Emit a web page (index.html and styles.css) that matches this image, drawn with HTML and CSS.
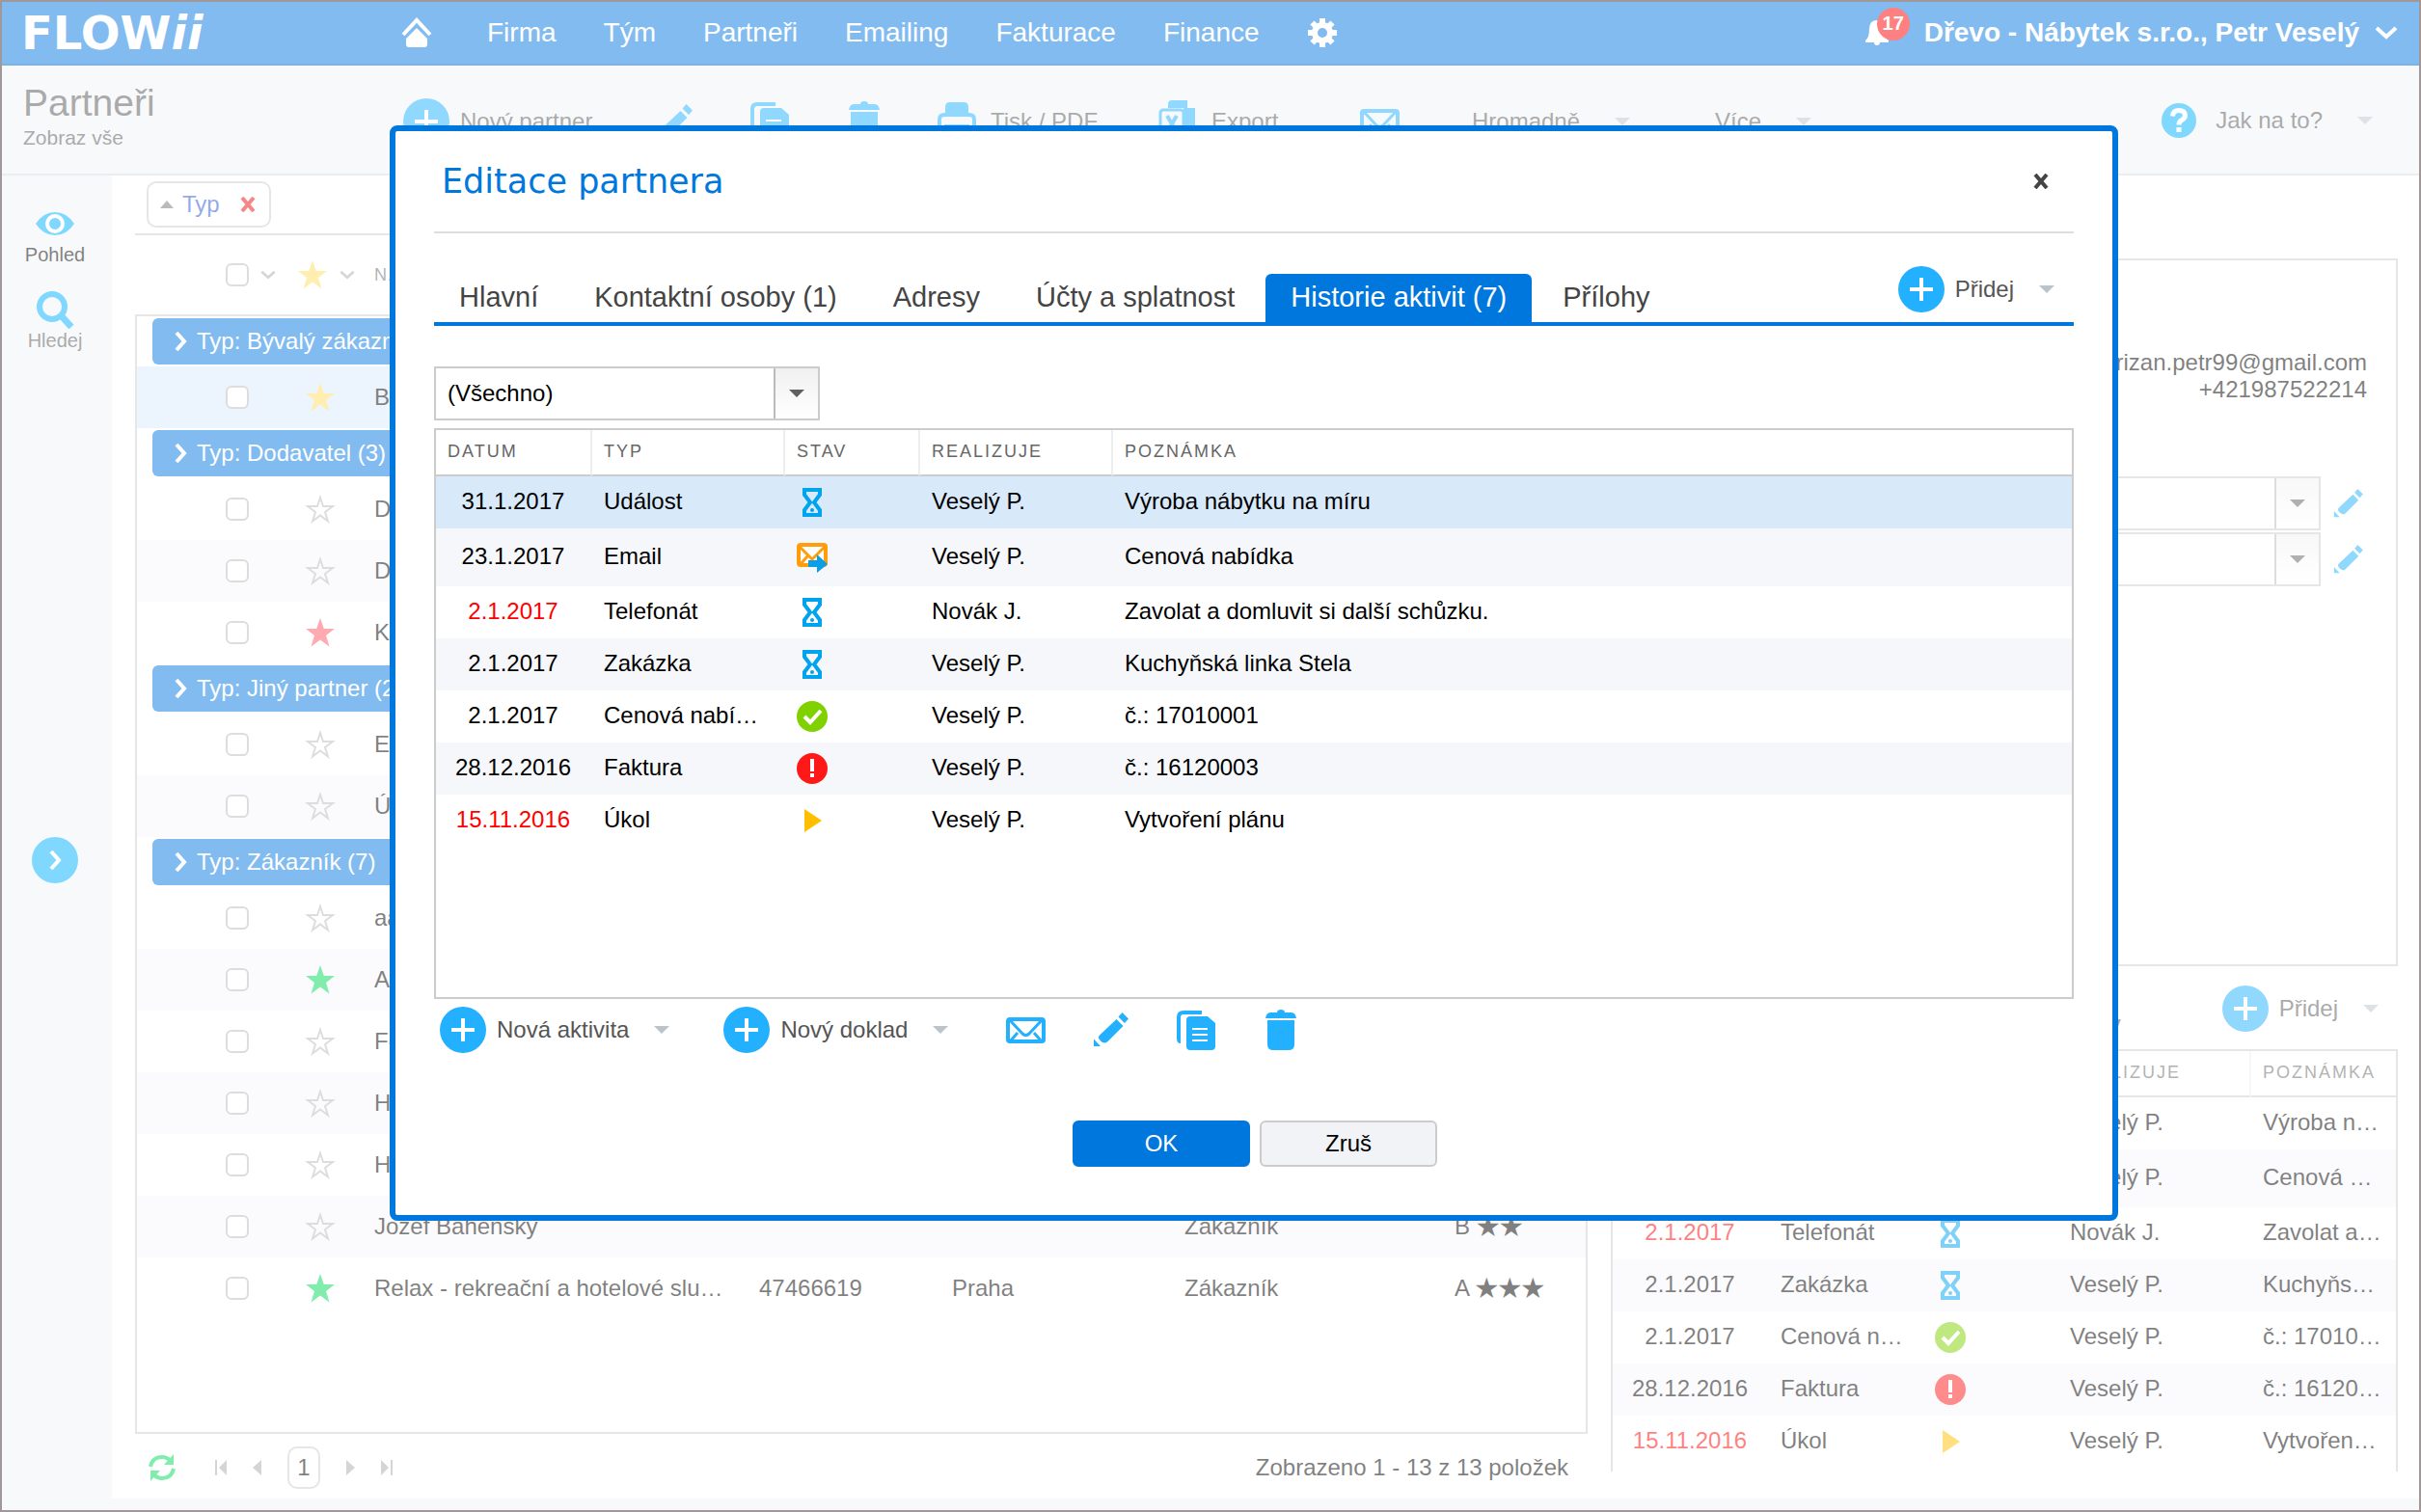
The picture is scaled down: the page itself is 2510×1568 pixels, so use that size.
FILE: index.html
```html
<!DOCTYPE html>
<html lang="cs">
<head>
    <meta charset="UTF-8">
    <meta name="viewport" content="width=device-width, initial-scale=1.0">
    <title>Flowii - Partneři</title>
    <link rel="stylesheet" href="styles.css">
</head>
<body>
    <!-- Ikony -->
    <svg class="sprite" aria-hidden="true">
        <symbol id="i-plus" viewBox="0 0 48 48"><circle cx="24" cy="24" r="24"/><path d="M24 12v24M12 24h24" stroke="#fff" stroke-width="4"/></symbol>
        <symbol id="i-pencil" viewBox="0 0 48 48"><path d="M30.500 13l7 7L21 36.500q-3.500 2.500-7-1t-1-6zM32.500 10.500L36.500 6l6.500 6.500-4 4.500zM7 33.500l7 7.500H7z"/></symbol>
        <symbol id="i-copy" viewBox="0 0 48 48"><path d="M31 6H12q-5 0-5 5v22q0 3 2 3" fill="none" stroke="currentColor" stroke-width="4"/><path d="M19 10h18l8 7v24q0 4-4 4H19q-4 0-4-4V14q0-4 4-4z"/><path d="M21 23h16M21 29h16M21 35h16" stroke="#fff" stroke-width="2"/></symbol>
        <symbol id="i-trash" viewBox="0 0 48 48"><path d="M9 12q1-6 5-6h7q0-3 4-3t4 3h7q4 0 5 6zM11 14h28v25q0 6-6 6H17q-6 0-6-6z"/></symbol>
        <symbol id="i-mail" viewBox="0 0 48 48"><rect x="6" y="13" width="37" height="23" rx="2" fill="none" stroke="currentColor" stroke-width="4"/><path d="M8 14l13 14q3.500 3 7 0l13-14M9 35l7-8M40 35l-7-8" fill="none" stroke="currentColor" stroke-width="3"/></symbol>
        <symbol id="i-print" viewBox="0 0 48 48"><path d="M12 16V9q0-5 5-5h14q5 0 5 5v7z"/><path d="M6 38V22q0-5 5-5h26q5 0 5 5v16M11 29h26" fill="none" stroke="currentColor" stroke-width="4"/></symbol>
        <symbol id="i-excel" viewBox="0 0 48 48"><path d="M14 10V6q0-4 4-4h16v8h8v30H30V10z"/><rect x="6" y="12" width="24" height="32" rx="3" fill="none" stroke="currentColor" stroke-width="3"/><path d="M13 18l10 17M23 18L13 35" stroke="currentColor" stroke-width="4"/></symbol>
        <symbol id="i-help" viewBox="0 0 36 36"><circle cx="18" cy="18" r="18"/><path d="M11.500 13.500q.500-6 6.500-6t6.500 5q0 3-3.500 5-3 1.500-3 5" fill="none" stroke="#fff" stroke-width="5"/><path d="M15.500 25h5v5h-5z" fill="#fff"/></symbol>
        <symbol id="i-down" viewBox="0 0 16 8"><path d="M0 0h16L8 8z"/></symbol>
        <symbol id="i-chev" viewBox="0 0 24 14"><path d="M2 2l10 9L22 2" fill="none" stroke="currentColor" stroke-width="4"/></symbol>
        <symbol id="i-right" viewBox="0 0 14 22"><path d="M3 2l8 9-8 9" fill="none" stroke="currentColor" stroke-width="4"/></symbol>
        <symbol id="i-star" viewBox="0 0 32 32"><path d="M16 1l3.800 11H31l-9 7 3.500 11.500L16 23.500 6.500 30.500 10 19 1 12h11.200z"/></symbol>
        <symbol id="i-star-o" viewBox="0 0 32 32"><path d="M16 4l3 9h10l-8 6 3 9.500L16 22.500 8 28.500l3-9.500L3 13h10z" fill="none" stroke="currentColor" stroke-width="2"/></symbol>
        <symbol id="i-x" viewBox="0 0 16 16"><path d="M2 1l12 14M14 1L2 15" stroke="currentColor" stroke-width="4"/></symbol>
        <symbol id="i-wait" viewBox="0 0 32 32"><path d="M8 3h16v5l-6 8 6 8v5H8v-5l6-8-6-8z" fill="none" stroke="#00a3ee" stroke-width="4"/><circle cx="16" cy="24" r="2" fill="#00a3ee"/></symbol>
        <symbol id="i-sent" viewBox="0 0 32 32"><rect x="2" y="3" width="28" height="21" rx="2" fill="#fff" stroke="#ff9d0a" stroke-width="4"/><path d="M3 5l13 13L29 5M4 23l7-8" fill="none" stroke="#ff9d0a" stroke-width="3"/><path d="M12 19h9v-6l11 10-11 9v-6h-9z" fill="#0a9fe8"/></symbol>
        <symbol id="i-done" viewBox="0 0 32 32"><circle cx="16" cy="16" r="16" fill="#7fd100"/><path d="M8 16l6 6L25 10" fill="none" stroke="#fff" stroke-width="4"/></symbol>
        <symbol id="i-alert" viewBox="0 0 32 32"><circle cx="16" cy="16" r="16" fill="#ff1818"/><path d="M16 6v13M16 21v4" stroke="#fff" stroke-width="4"/></symbol>
        <symbol id="i-play" viewBox="0 0 32 32"><path d="M8 4l18 12L8 28z" fill="#ffbe00"/></symbol>
    </svg>

    <header class="topbar">
        <a class="logo" href="#">FLOW<i>ii</i></a>
        <nav class="nav">
            <a href="#" aria-label="Domů"><svg class="home" viewBox="0 0 32 32"><path d="M2 18L16 3l14 15" fill="none" stroke="#fff" stroke-width="4"/><path d="M16 11l11 11v6q0 3-3 3H8q-3 0-3-3v-6z"/></svg></a>
            <a href="#">Firma</a>
            <a href="#">Tým</a>
            <a href="#">Partneři</a>
            <a href="#">Emailing</a>
            <a href="#">Fakturace</a>
            <a href="#">Finance</a>
            <a href="#" aria-label="Nastavení"><svg class="gear" viewBox="0 0 32 32"><circle cx="16" cy="16" r="8" fill="none" stroke="#fff" stroke-width="6"/><path d="M16 1v6M16 25v6M1 16h6M25 16h6M5.500 5.500l4 4M22.500 22.500l4 4M26.500 5.500l-4 4M9.500 22.500l-4 4" stroke="#fff" stroke-width="6"/></svg></a>
        </nav>
        <div class="account">
            <button class="bell" aria-label="Upozornění">
                <svg viewBox="0 0 26 26"><path d="M13 0q8 0 8 9 0 9 4 12v2H1v-2q4-3 4-12 0-9 8-9zM10 23h6q0 3-3 3t-3-3z"/></svg>
                <span class="count">17</span>
            </button>
            <button class="user">Dřevo - Nábytek s.r.o., Petr Veselý <svg class="chev"><use href="#i-chev"/></svg></button>
        </div>
    </header>

    <div class="toolbar">
        <div class="page-title">
            <h1>Partneři</h1>
            <a href="#">Zobraz vše</a>
        </div>
        <div class="tools">
            <button class="tool"><svg class="icon"><use href="#i-plus"/></svg>Nový partner</button>
            <button class="tool" aria-label="Upravit"><svg class="icon"><use href="#i-pencil"/></svg></button>
            <button class="tool" aria-label="Kopírovat"><svg class="icon"><use href="#i-copy"/></svg></button>
            <button class="tool" aria-label="Smazat"><svg class="icon"><use href="#i-trash"/></svg></button>
            <button class="tool"><svg class="icon"><use href="#i-print"/></svg>Tisk / PDF</button>
            <button class="tool"><svg class="icon"><use href="#i-excel"/></svg>Export</button>
            <button class="tool" aria-label="Email"><svg class="icon"><use href="#i-mail"/></svg></button>
            <button class="tool">Hromadně<svg class="down"><use href="#i-down"/></svg></button>
            <button class="tool">Více<svg class="down"><use href="#i-down"/></svg></button>
        </div>
        <button class="tool help"><svg class="help-icon"><use href="#i-help"/></svg>Jak na to?<svg class="down"><use href="#i-down"/></svg></button>
    </div>

    <div class="page">
        <aside class="sidebar">
            <button class="side-item active"><svg viewBox="0 0 40 40"><path d="M0 20Q8 8 20 8t20 12Q32 32 20 32T0 20z"/><circle cx="20" cy="20" r="8" fill="none" stroke="#fff" stroke-width="4"/></svg>Pohled</button>
            <button class="side-item"><svg viewBox="0 0 40 40"><circle cx="17" cy="17" r="13" fill="none" stroke="#00b1ff" stroke-width="6"/><path d="M26 26l11 12" stroke="#00b1ff" stroke-width="7"/></svg>Hledej</button>
            <button class="expand" aria-label="Rozbalit"><svg><use href="#i-right"/></svg></button>
        </aside>

        <main class="content">
            <section class="partners">
                <div class="group-by">
                    <span class="chip"><svg class="up" viewBox="0 0 14 8"><path d="M0 8h14L7 0z"/></svg>Typ<button class="remove" aria-label="Zrušit seskupení"><svg><use href="#i-x"/></svg></button></span>
                </div>
                <div class="list-head">
                    <input type="checkbox" aria-label="Vybrat vše">
                    <svg class="chev-s"><use href="#i-chev"/></svg>
                    <svg class="star yellow"><use href="#i-star"/></svg>
                    <svg class="chev-s"><use href="#i-chev"/></svg>
                    <span>NÁZEV</span>
                </div>
                <div class="list-body">
                    <table class="list">
                        <colgroup><col class="c-check"><col class="c-star"><col class="c-name"><col class="c-ico"><col class="c-city"><col class="c-type"><col></colgroup>
                        <tbody>
                            <tr class="group"><th colspan="7"><button><svg><use href="#i-right"/></svg>Typ: Bývalý zákazník (1)</button></th></tr>
                            <tr class="selected"><td><input type="checkbox" aria-label="Vybrat"></td><td><svg class="star yellow"><use href="#i-star"/></svg></td><td>Bytservis</td><td></td><td></td><td></td><td></td></tr>
                            <tr class="group"><th colspan="7"><button><svg><use href="#i-right"/></svg>Typ: Dodavatel (3)</button></th></tr>
                            <tr><td><input type="checkbox" aria-label="Vybrat"></td><td><svg class="star"><use href="#i-star-o"/></svg></td><td>Dřevona</td><td></td><td></td><td></td><td></td></tr>
                            <tr class="alt"><td><input type="checkbox" aria-label="Vybrat"></td><td><svg class="star"><use href="#i-star-o"/></svg></td><td>Dýhy</td><td></td><td></td><td></td><td></td></tr>
                            <tr><td><input type="checkbox" aria-label="Vybrat"></td><td><svg class="star red"><use href="#i-star"/></svg></td><td>Kování</td><td></td><td></td><td></td><td></td></tr>
                            <tr class="group"><th colspan="7"><button><svg><use href="#i-right"/></svg>Typ: Jiný partner (2)</button></th></tr>
                            <tr><td><input type="checkbox" aria-label="Vybrat"></td><td><svg class="star"><use href="#i-star-o"/></svg></td><td>Elektro</td><td></td><td></td><td></td><td></td></tr>
                            <tr class="alt"><td><input type="checkbox" aria-label="Vybrat"></td><td><svg class="star"><use href="#i-star-o"/></svg></td><td>Účetní</td><td></td><td></td><td></td><td></td></tr>
                            <tr class="group"><th colspan="7"><button><svg><use href="#i-right"/></svg>Typ: Zákazník (7)</button></th></tr>
                            <tr><td><input type="checkbox" aria-label="Vybrat"></td><td><svg class="star"><use href="#i-star-o"/></svg></td><td>aaa</td><td></td><td></td><td></td><td></td></tr>
                            <tr class="alt"><td><input type="checkbox" aria-label="Vybrat"></td><td><svg class="star green"><use href="#i-star"/></svg></td><td>Alfa</td><td></td><td></td><td></td><td></td></tr>
                            <tr><td><input type="checkbox" aria-label="Vybrat"></td><td><svg class="star"><use href="#i-star-o"/></svg></td><td>Fe</td><td></td><td></td><td></td><td></td></tr>
                            <tr class="alt"><td><input type="checkbox" aria-label="Vybrat"></td><td><svg class="star"><use href="#i-star-o"/></svg></td><td>Hotel</td><td></td><td></td><td></td><td></td></tr>
                            <tr><td><input type="checkbox" aria-label="Vybrat"></td><td><svg class="star"><use href="#i-star-o"/></svg></td><td>Hudec</td><td></td><td></td><td></td><td></td></tr>
                            <tr class="alt"><td><input type="checkbox" aria-label="Vybrat"></td><td><svg class="star"><use href="#i-star-o"/></svg></td><td>Jozef Bahenský</td><td></td><td></td><td>Zákazník</td><td>B ★★</td></tr>
                            <tr><td><input type="checkbox" aria-label="Vybrat"></td><td><svg class="star green"><use href="#i-star"/></svg></td><td>Relax - rekreační a hotelové služby</td><td>47466619</td><td>Praha</td><td>Zákazník</td><td>A ★★★</td></tr>
                        </tbody>
                    </table>
                </div>
                <div class="pager">
                    <button class="refresh" aria-label="Obnovit"><svg viewBox="0 0 28 28"><path d="M2 13Q4 3 14 3q5 0 9 4M26 15q-2 10-12 10-5 0-9-4" fill="none" stroke="currentColor" stroke-width="4"/><path d="M26 0v11H16zM2 28V17h10z"/></svg></button>
                    <button aria-label="První"><svg viewBox="0 0 14 16"><path d="M0 0h2v16H0zM12 0v16L4 8z"/></svg></button>
                    <button aria-label="Předchozí"><svg viewBox="0 0 14 16"><path d="M12 0v16L3 8z"/></svg></button>
                    <button class="current">1</button>
                    <button aria-label="Další"><svg viewBox="0 0 14 16"><path d="M2 0v16l9-8z"/></svg></button>
                    <button aria-label="Poslední"><svg viewBox="0 0 14 16"><path d="M12 0h2v16h-2zM2 0v16l8-8z"/></svg></button>
                    <span class="total">Zobrazeno 1 - 13 z 13 položek</span>
                </div>
            </section>

            <section class="detail">
                <div class="card">
                    <div class="contact">
                        <a href="#">rizan.petr99@gmail.com</a>
                        <span>+421987522214</span>
                    </div>
                    <div class="field">
                        <div class="combo"><select aria-label="Kontaktní osoba"><option></option></select><span class="arrow"><svg class="down"><use href="#i-down"/></svg></span></div>
                        <button aria-label="Upravit osobu"><svg class="pen"><use href="#i-pencil"/></svg></button>
                    </div>
                    <div class="field">
                        <div class="combo"><select aria-label="Adresa"><option></option></select><span class="arrow"><svg class="down"><use href="#i-down"/></svg></span></div>
                        <button aria-label="Upravit adresu"><svg class="pen"><use href="#i-pencil"/></svg></button>
                    </div>
                </div>
                <div class="detail-head">
                    <h2>Aktivity</h2>
                    <button class="tool"><svg class="icon"><use href="#i-plus"/></svg>Přidej<svg class="down"><use href="#i-down"/></svg></button>
                </div>
                <div class="grid side-grid">
                    <table>
                        <colgroup><col class="g-date"><col class="g-type"><col class="g-state"><col class="g-who"><col></colgroup>
                        <thead><tr><th>DATUM</th><th>TYP</th><th>STAV</th><th>REALIZUJE</th><th>POZNÁMKA</th></tr></thead>
                        <tbody>
                            <tr><td>31.1.2017</td><td>Událost</td><td><svg><use href="#i-wait"/></svg></td><td>Veselý P.</td><td>Výroba nábytku na míru</td></tr>
                            <tr class="alt tall"><td>23.1.2017</td><td>Email</td><td><svg><use href="#i-sent"/></svg></td><td>Veselý P.</td><td>Cenová nabídka</td></tr>
                            <tr><td class="late">2.1.2017</td><td>Telefonát</td><td><svg><use href="#i-wait"/></svg></td><td>Novák J.</td><td>Zavolat a domluvit si další schůzku.</td></tr>
                            <tr class="alt"><td>2.1.2017</td><td>Zakázka</td><td><svg><use href="#i-wait"/></svg></td><td>Veselý P.</td><td>Kuchyňská linka Stela</td></tr>
                            <tr><td>2.1.2017</td><td>Cenová nabídka</td><td><svg><use href="#i-done"/></svg></td><td>Veselý P.</td><td>č.: 17010001</td></tr>
                            <tr class="alt"><td>28.12.2016</td><td>Faktura</td><td><svg><use href="#i-alert"/></svg></td><td>Veselý P.</td><td>č.: 16120003</td></tr>
                            <tr><td class="late">15.11.2016</td><td>Úkol</td><td><svg><use href="#i-play"/></svg></td><td>Veselý P.</td><td>Vytvoření plánu</td></tr>
                        </tbody>
                    </table>
                </div>
            </section>
        </main>
    </div>

    <div class="overlay">
        <div class="dialog" role="dialog" aria-labelledby="dialog-title">
            <div class="dialog-head">
                <h2 id="dialog-title">Editace partnera</h2>
                <button class="close" aria-label="Zavřít"><svg><use href="#i-x"/></svg></button>
            </div>
            <div class="tabs">
                <button class="tab">Hlavní</button>
                <button class="tab">Kontaktní osoby (1)</button>
                <button class="tab">Adresy</button>
                <button class="tab">Účty a splatnost</button>
                <button class="tab active">Historie aktivit (7)</button>
                <button class="tab">Přílohy</button>
                <button class="tool add"><svg class="icon"><use href="#i-plus"/></svg>Přidej<svg class="down"><use href="#i-down"/></svg></button>
            </div>
            <div class="combo filter"><select aria-label="Filtr aktivit"><option>(Všechno)</option></select><span class="arrow"><svg class="down"><use href="#i-down"/></svg></span></div>
            <div class="grid">
                <table>
                    <colgroup><col class="g-date"><col class="g-type"><col class="g-state"><col class="g-who"><col></colgroup>
                    <thead><tr><th>DATUM</th><th>TYP</th><th>STAV</th><th>REALIZUJE</th><th>POZNÁMKA</th></tr></thead>
                    <tbody>
                        <tr class="selected"><td>31.1.2017</td><td>Událost</td><td><svg><use href="#i-wait"/></svg></td><td>Veselý P.</td><td>Výroba nábytku na míru</td></tr>
                        <tr class="alt tall"><td>23.1.2017</td><td>Email</td><td><svg><use href="#i-sent"/></svg></td><td>Veselý P.</td><td>Cenová nabídka</td></tr>
                        <tr><td class="late">2.1.2017</td><td>Telefonát</td><td><svg><use href="#i-wait"/></svg></td><td>Novák J.</td><td>Zavolat a domluvit si další schůzku.</td></tr>
                        <tr class="alt"><td>2.1.2017</td><td>Zakázka</td><td><svg><use href="#i-wait"/></svg></td><td>Veselý P.</td><td>Kuchyňská linka Stela</td></tr>
                        <tr><td>2.1.2017</td><td>Cenová nabídka</td><td><svg><use href="#i-done"/></svg></td><td>Veselý P.</td><td>č.: 17010001</td></tr>
                        <tr class="alt"><td>28.12.2016</td><td>Faktura</td><td><svg><use href="#i-alert"/></svg></td><td>Veselý P.</td><td>č.: 16120003</td></tr>
                        <tr><td class="late">15.11.2016</td><td>Úkol</td><td><svg><use href="#i-play"/></svg></td><td>Veselý P.</td><td>Vytvoření plánu</td></tr>
                    </tbody>
                </table>
            </div>
            <div class="dialog-tools">
                <button class="tool wide"><svg class="icon"><use href="#i-plus"/></svg>Nová aktivita<svg class="down"><use href="#i-down"/></svg></button>
                <button class="tool wide"><svg class="icon"><use href="#i-plus"/></svg>Nový doklad<svg class="down"><use href="#i-down"/></svg></button>
                <button class="tool" aria-label="Email"><svg class="icon"><use href="#i-mail"/></svg></button>
                <button class="tool" aria-label="Upravit"><svg class="icon"><use href="#i-pencil"/></svg></button>
                <button class="tool" aria-label="Kopírovat"><svg class="icon"><use href="#i-copy"/></svg></button>
                <button class="tool" aria-label="Smazat"><svg class="icon"><use href="#i-trash"/></svg></button>
            </div>
            <div class="dialog-buttons">
                <button class="btn primary">OK</button>
                <button class="btn">Zruš</button>
            </div>
        </div>
    </div>
</body>
</html>
```
FILE: styles.css
```css
* {
    box-sizing: border-box;
}
body {
    margin: 0;
    min-height: 100vh;
    display: flex;
    flex-direction: column;
    position: relative;
    border: 2px solid #a09898;
    background: #fff;
    font-family: "Liberation Sans", "Noto Sans CJK JP", Arial, sans-serif;
    font-size: 24px;
    line-height: 28px;
    color: #000;
}
button {
    margin: 0;
    padding: 0;
    border: 0;
    background: none;
    font: inherit;
    color: inherit;
}
a {
    color: inherit;
    text-decoration: none;
}
h1, h2 {
    margin: 0;
    font-weight: normal;
}
svg {
    display: block;
    flex: none;
    fill: currentColor;
}
.sprite {
    position: absolute;
    width: 0;
    height: 0;
}

/* Horní lišta */
.topbar {
    display: flex;
    align-items: center;
    height: 66px;
    padding: 0 22px 0 20px;
    background: #0377df;
    border-bottom: 2px solid #0064c0;
    color: #fff;
    font-size: 28px;
}
.logo {
    width: 394px;
    font-family: "DejaVu Sans", sans-serif;
    font-size: 48px;
    line-height: 64px;
    font-weight: bold;
}
.nav {
    display: flex;
    align-items: center;
    gap: 49px;
}
.home, .gear {
    width: 32px;
    height: 32px;
}
.home {
    margin-right: 8px;
}
.account {
    display: flex;
    align-items: center;
    gap: 14px;
    margin-left: auto;
}
.bell {
    position: relative;
    width: 48px;
    color: #fff;
}
.bell svg {
    width: 26px;
    height: 28px;
}
.count {
    position: absolute;
    left: 13px;
    top: -12px;
    width: 34px;
    height: 34px;
    border-radius: 50%;
    background: #ff0000;
    font-size: 20px;
    line-height: 32px;
    font-weight: bold;
    text-align: center;
}
.user {
    display: flex;
    align-items: center;
    gap: 16px;
    font-weight: bold;
}
.chev {
    width: 24px;
    height: 14px;
}

/* Nástroje */
.toolbar {
    display: flex;
    height: 114px;
    padding: 0 48px 0 22px;
    background: #eff3f7;
    border-bottom: 2px solid #d5dde3;
    color: #555;
}
.page-title {
    width: 394px;
    padding-top: 16px;
}
.page-title h1 {
    font-size: 39px;
    line-height: 46px;
}
.page-title a {
    display: block;
    font-size: 21px;
    line-height: 26px;
}
.tools {
    display: grid;
    grid-template-columns: 257px 98px 98px 97px 229px 209px 120px 252px auto;
    align-items: center;
    height: 116px;
}
.tool {
    display: flex;
    align-items: center;
    gap: 11px;
    color: #555;
    white-space: nowrap;
}
.icon {
    width: 48px;
    height: 48px;
    color: #22b0ff;
}
.down {
    width: 16px;
    height: 8px;
    margin-left: 15px;
    color: #b9c4cc;
}
.tools .down, .help .down {
    margin-left: 25px;
}
.help {
    margin-left: auto;
    height: 114px;
}
.help-icon {
    width: 36px;
    height: 36px;
    margin-right: 9px;
    color: #00b1ff;
}

/* Obsah */
.page {
    flex: 1;
    display: flex;
    background: #eff3f7;
}
.sidebar {
    width: 114px;
    display: flex;
    flex-direction: column;
    align-items: center;
    padding: 30px 4px 0 0;
    font-size: 20px;
    line-height: 24px;
    color: #555;
}
.side-item {
    display: flex;
    flex-direction: column;
    align-items: center;
    margin-bottom: 25px;
}
.side-item.active {
    color: #000;
}
.side-item svg {
    width: 40px;
    height: 40px;
    fill: #00b1ff;
}
.expand {
    display: flex;
    align-items: center;
    justify-content: center;
    width: 48px;
    height: 48px;
    margin-top: 478px;
    border-radius: 50%;
    background: #00b1ff;
    color: #fff;
}
.expand svg {
    width: 14px;
    height: 22px;
}
.content {
    flex: 1;
    display: grid;
    grid-template-columns: 1506fr 816fr;
    gap: 24px;
    margin-bottom: 12px;
    padding: 0 22px 0 24px;
    background: #fff;
}
.partners, .detail {
    display: flex;
    flex-direction: column;
    min-width: 0;
}
.group-by {
    height: 62px;
    padding: 6px 12px;
    border-bottom: 2px solid #ccc;
}
.chip {
    display: inline-flex;
    align-items: center;
    gap: 9px;
    height: 48px;
    padding: 0 14px 0 12px;
    border: 2px solid #ccc;
    border-radius: 10px;
    color: #2953d6;
}
.up {
    width: 14px;
    height: 8px;
    color: #777;
}
.remove {
    margin-left: 12px;
    color: #e81010;
}
.remove svg, .close svg {
    width: 16px;
    height: 16px;
}
.list-head {
    display: flex;
    align-items: center;
    height: 82px;
    padding-left: 94px;
    font-size: 18px;
    letter-spacing: 2px;
    color: #666;
}
input[type="checkbox"] {
    appearance: none;
    display: block;
    width: 24px;
    height: 24px;
    margin: 0;
    border: 2px solid #bbb;
    border-radius: 6px;
    background: #fff;
}
.chev-s {
    width: 16px;
    height: 10px;
    margin: 0 22px 0 12px;
    color: #aaa;
}
.list-head .star + .chev-s {
    margin-right: 20px;
}
.star {
    width: 32px;
    height: 32px;
    color: #bbb;
}
.yellow {
    color: #ffdd61;
}
.red {
    color: #ff5361;
}
.green {
    color: #00db5a;
}
.list-body {
    flex: 1;
    border: 2px solid #ccc;
}
table {
    width: 100%;
    table-layout: fixed;
    border-collapse: separate;
    border-spacing: 0;
}
td, th {
    padding: 0 14px 0 12px;
    font-weight: normal;
    text-align: left;
    white-space: nowrap;
    overflow: hidden;
    text-overflow: ellipsis;
}
.list td {
    height: 64px;
}
.list td:nth-child(1) {
    padding-left: 92px;
}
.list td:nth-child(2) {
    padding: 0 0 0 14px;
}
.c-check {
    width: 160px;
}
.c-star {
    width: 74px;
}
.c-name {
    width: 399px;
}
.c-ico {
    width: 200px;
}
.c-city {
    width: 241px;
}
.c-type {
    width: 280px;
}
.group th {
    height: 52px;
    padding: 0 16px;
}
.group button {
    display: flex;
    align-items: center;
    gap: 10px;
    width: 100%;
    height: 48px;
    padding-left: 22px;
    border-radius: 6px;
    background: #0377df;
    color: #fff;
}
.group svg {
    width: 14px;
    height: 22px;
}
.alt td {
    background: #f6f7fa;
}
.selected td {
    background: #d8e9fa;
}
.pager {
    display: flex;
    align-items: center;
    height: 67px;
    padding: 2px 20px 0 14px;
}
.pager button {
    display: flex;
    align-items: center;
    justify-content: center;
    width: 36px;
    height: 44px;
    color: #aaa;
}
.pager svg {
    width: 14px;
    height: 16px;
}
.pager .refresh {
    width: 28px;
    margin-right: 30px;
    color: #00db5a;
}
.pager .refresh svg {
    width: 28px;
    height: 28px;
}
.pager .current {
    width: 34px;
    margin: 0 14px;
    border: 2px solid #ccc;
    border-radius: 10px;
    color: #000;
}
.total {
    margin-left: auto;
}

/* Detail partnera */
.detail {
    padding: 86px 0 28px;
}
.card {
    flex: 1;
    border: 2px solid #ccc;
    padding: 92px 30px 0;
}
.contact {
    display: flex;
    flex-direction: column;
    align-items: flex-end;
    height: 132px;
}
.field {
    display: flex;
    align-items: center;
    gap: 8px;
    margin-bottom: 2px;
}
.field .combo {
    flex: 1;
}
.pen {
    width: 40px;
    height: 48px;
    color: #22b0ff;
}
.combo {
    position: relative;
    height: 56px;
    border: 2px solid #ccc;
}
.combo select {
    appearance: none;
    width: 100%;
    height: 100%;
    padding: 0 60px 0 12px;
    border: 0;
    background: #fff;
    font: inherit;
    color: #000;
}
.arrow {
    position: absolute;
    right: 0;
    top: 0;
    bottom: 0;
    width: 46px;
    display: flex;
    align-items: center;
    justify-content: center;
    border-left: 2px solid #bbb;
    background: linear-gradient(#f0f0f0, #fff);
    pointer-events: none;
}
.arrow .down {
    margin: 0;
    color: #606060;
}
.detail-head {
    display: flex;
    align-items: center;
    height: 86px;
    padding: 2px 20px 0 440px;
}
.detail-head h2 {
    font-size: 28px;
    line-height: 34px;
    margin-top: 34px;
    color: #555;
}
.detail-head .tool {
    margin-left: auto;
}

/* Tabulka aktivit */
.grid {
    border: 2px solid #ccc;
    min-height: 592px;
}
.grid th {
    height: 48px;
    padding-bottom: 2px;
    border-right: 2px solid #eee;
    border-bottom: 2px solid #ccc;
    font-size: 18px;
    letter-spacing: 2px;
    color: #666;
}
.grid th:last-child {
    border-right: 0;
}
.grid td {
    height: 54px;
    padding-bottom: 2px;
}
.grid .tall td {
    height: 60px;
}
.grid td:first-child {
    padding: 0 2px 2px 0;
    text-align: center;
}
.grid td:nth-child(3) {
    padding-bottom: 0;
}
.grid td svg {
    width: 32px;
    height: 32px;
}
.grid .late {
    color: #ff0000;
}
.g-date {
    width: 162px;
}
.g-type {
    width: 200px;
}
.g-state {
    width: 140px;
}
.g-who {
    width: 200px;
}
.side-grid {
    min-height: 438px;
    border-bottom: 0;
}
.side-grid .g-type {
    width: 160px;
}

/* Dialog */
.overlay {
    position: absolute;
    inset: 0;
    background: rgba(255, 255, 255, 0.5);
}
.dialog {
    position: absolute;
    left: 402px;
    right: 312px;
    top: 128px;
    padding: 0 40px 50px;
    border: 6px solid #0077dc;
    border-radius: 8px;
    background: #fff;
}
.dialog-head {
    display: flex;
    align-items: center;
    justify-content: space-between;
    height: 106px;
    padding: 0 26px 0 8px;
    border-bottom: 2px solid #ddd;
}
.dialog-head h2 {
    font-family: "DejaVu Sans", sans-serif;
    font-size: 35px;
    color: #0077dc;
}
.close {
    color: #444;
}
.tabs {
    display: flex;
    align-items: flex-end;
    gap: 6px;
    height: 62px;
    margin-top: 34px;
    border-bottom: 4px solid #0077dc;
}
.tab {
    height: 50px;
    padding: 0 26px 2px;
    border-radius: 6px 6px 0 0;
    font-size: 29px;
    color: #444;
    white-space: nowrap;
}
.tab.active {
    background: #0077dc;
    color: #fff;
}
.add {
    align-self: flex-start;
    margin-left: auto;
    margin-right: 20px;
}
.filter {
    width: 400px;
    margin: 42px 0 8px;
}
.dialog .grid td:nth-child(2) {
    padding-right: 16px;
}
.dialog-tools {
    display: flex;
    gap: 40px;
    padding: 8px 6px 0;
}
.dialog-tools .wide {
    margin-right: 16px;
}
.dialog-buttons {
    display: flex;
    justify-content: center;
    gap: 10px;
    margin-top: 70px;
    padding-left: 2px;
}
.btn {
    width: 184px;
    height: 48px;
    border: 2px solid #ccc;
    border-radius: 6px;
    background: #f2f3f7;
}
.primary {
    border-color: #0077dc;
    background: #0077dc;
    color: #fff;
}
```
